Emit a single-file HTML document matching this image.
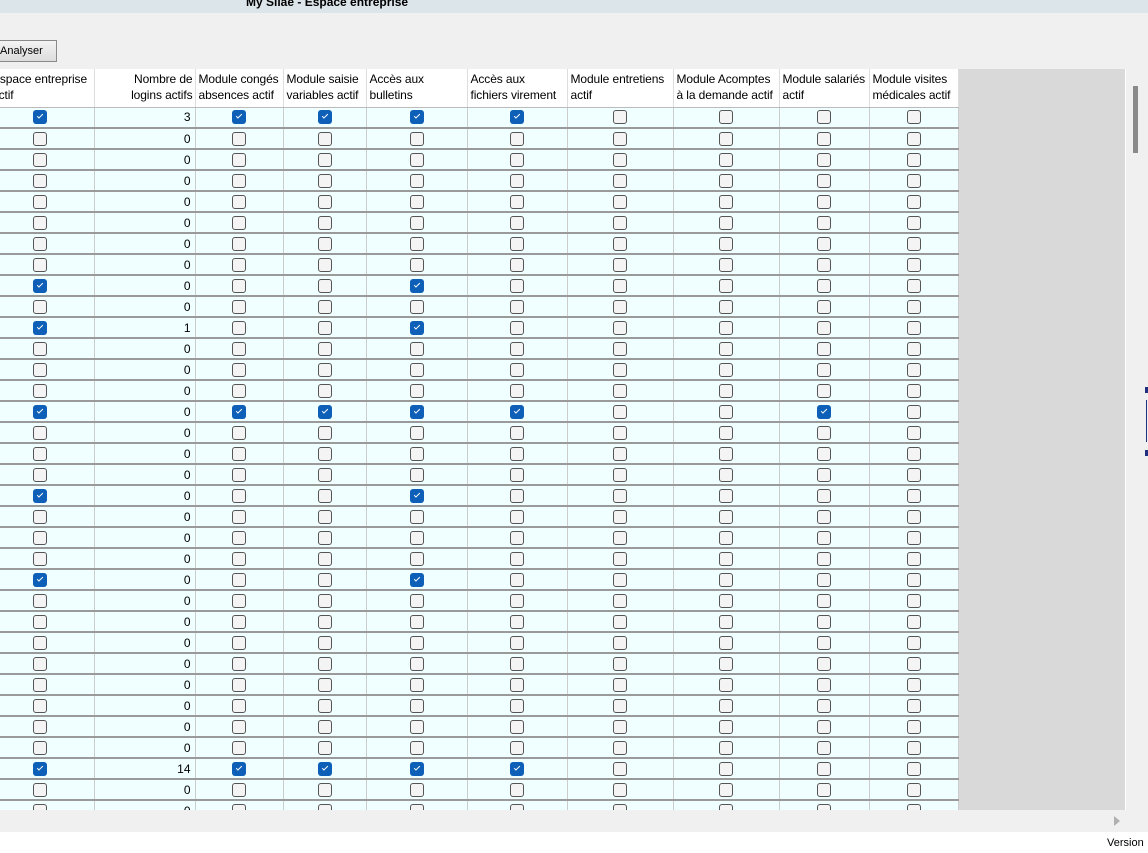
<!DOCTYPE html>
<html><head><meta charset="utf-8"><style>
*{margin:0;padding:0;box-sizing:border-box}
body{width:1148px;height:853px;overflow:hidden;background:#f0f0f0;font-family:"Liberation Sans","DejaVu Sans",sans-serif;font-size:12px;color:#000;position:relative}
.title{position:absolute;left:0;top:0;width:1148px;height:13px;background:#dce5ea;overflow:hidden}
.title span{position:absolute;left:246px;top:-5px;font-weight:bold;font-size:12px}
.btn{position:absolute;left:-4px;top:40px;width:61px;height:22px;border:1px solid #8a8a8a;background:linear-gradient(#f4f4f4,#dcdcdc);font-size:11px;line-height:20px;padding-left:3px}
.gray{position:absolute;left:958px;top:69px;width:167px;height:741px;background:#d9d9d9}
.wline{position:absolute;left:1125px;top:69px;width:1px;height:741px;background:#fff}
.thumb{position:absolute;left:1133px;top:86px;width:5px;height:67px;background:#8a8a8a}
.mk{position:absolute;left:1145px;width:3px;background:#203080}
.bottom{position:absolute;left:0;top:832px;width:1148px;height:21px;background:#fff}
.ver{position:absolute;left:1107px;top:837px;font-size:11px}
.arr{position:absolute;left:1114px;top:816px;width:0;height:0;border-left:6px solid #b0b0b0;border-top:5px solid transparent;border-bottom:5px solid transparent}
table{position:absolute;left:0;top:69px;border-collapse:collapse;table-layout:fixed;width:958px;background:#f0ffff}
td,th{overflow:hidden;white-space:nowrap;padding:0}
th{background:#fff;font-weight:normal;text-align:left;height:38px;line-height:16px;vertical-align:top;padding:2px 2px 0 3px;border-right:1px solid #ddd;border-bottom:1px solid #bbb;letter-spacing:-0.1px}
th.r{text-align:right}
th.f{text-indent:-11px;padding-left:0}
th.f span{margin-left:-8px}
td{height:21px;border-bottom:2px solid #9a9a9a;border-right:1px solid #ccc;text-align:center;vertical-align:middle}
td:first-child{padding-right:13px}
td.n{text-align:right;padding-right:4px}
tr.sel td{border-bottom:2px solid #9a9a9a}
i,b{display:inline-block;width:14px;height:14px;border-radius:3px;vertical-align:middle;margin-top:-1px}
i{border:1px solid #555;background:#f4f4f4}
b{background:#0e5fb8;position:relative}
b:after{content:"";position:absolute;left:4px;top:4px;width:5px;height:2px;border-left:1px solid #fff;border-bottom:1px solid #fff;transform:rotate(-45deg)}
</style></head><body>
<div class="title"><span>My Silae - Espace entreprise</span></div>
<div class="btn">Analyser</div>
<div class="gray"></div><div class="wline"></div>
<div class="thumb"></div>
<div class="mk" style="top:387px;height:6px"></div><div class="mk" style="top:400px;height:42px;width:1px;left:1146px"></div><div class="mk" style="top:450px;height:6px"></div>
<table>
<colgroup><col style="width:94px"><col style="width:101px"><col style="width:88px"><col style="width:83px"><col style="width:101px"><col style="width:100px"><col style="width:106px"><col style="width:106px"><col style="width:90px"><col style="width:89px"></colgroup>
<tr><th class="f"><div style="margin-left:-8px;text-indent:0">Espace entreprise<br>actif</div></th><th class="r">Nombre de<br>logins actifs</th><th>Module congés<br>absences actif</th><th>Module saisie<br>variables actif</th><th>Accès aux<br>bulletins</th><th>Accès aux<br>fichiers virement</th><th>Module entretiens<br>actif</th><th>Module Acomptes<br>à la demande actif</th><th>Module salariés<br>actif</th><th>Module visites<br>médicales actif</th></tr>
<tr class="sel"><td><b></b></td><td class="n">3</td><td><b></b></td><td><b></b></td><td><b></b></td><td><b></b></td><td><i></i></td><td><i></i></td><td><i></i></td><td><i></i></td></tr>
<tr><td><i></i></td><td class="n">0</td><td><i></i></td><td><i></i></td><td><i></i></td><td><i></i></td><td><i></i></td><td><i></i></td><td><i></i></td><td><i></i></td></tr>
<tr><td><i></i></td><td class="n">0</td><td><i></i></td><td><i></i></td><td><i></i></td><td><i></i></td><td><i></i></td><td><i></i></td><td><i></i></td><td><i></i></td></tr>
<tr><td><i></i></td><td class="n">0</td><td><i></i></td><td><i></i></td><td><i></i></td><td><i></i></td><td><i></i></td><td><i></i></td><td><i></i></td><td><i></i></td></tr>
<tr><td><i></i></td><td class="n">0</td><td><i></i></td><td><i></i></td><td><i></i></td><td><i></i></td><td><i></i></td><td><i></i></td><td><i></i></td><td><i></i></td></tr>
<tr><td><i></i></td><td class="n">0</td><td><i></i></td><td><i></i></td><td><i></i></td><td><i></i></td><td><i></i></td><td><i></i></td><td><i></i></td><td><i></i></td></tr>
<tr><td><i></i></td><td class="n">0</td><td><i></i></td><td><i></i></td><td><i></i></td><td><i></i></td><td><i></i></td><td><i></i></td><td><i></i></td><td><i></i></td></tr>
<tr><td><i></i></td><td class="n">0</td><td><i></i></td><td><i></i></td><td><i></i></td><td><i></i></td><td><i></i></td><td><i></i></td><td><i></i></td><td><i></i></td></tr>
<tr><td><b></b></td><td class="n">0</td><td><i></i></td><td><i></i></td><td><b></b></td><td><i></i></td><td><i></i></td><td><i></i></td><td><i></i></td><td><i></i></td></tr>
<tr><td><i></i></td><td class="n">0</td><td><i></i></td><td><i></i></td><td><i></i></td><td><i></i></td><td><i></i></td><td><i></i></td><td><i></i></td><td><i></i></td></tr>
<tr><td><b></b></td><td class="n">1</td><td><i></i></td><td><i></i></td><td><b></b></td><td><i></i></td><td><i></i></td><td><i></i></td><td><i></i></td><td><i></i></td></tr>
<tr><td><i></i></td><td class="n">0</td><td><i></i></td><td><i></i></td><td><i></i></td><td><i></i></td><td><i></i></td><td><i></i></td><td><i></i></td><td><i></i></td></tr>
<tr><td><i></i></td><td class="n">0</td><td><i></i></td><td><i></i></td><td><i></i></td><td><i></i></td><td><i></i></td><td><i></i></td><td><i></i></td><td><i></i></td></tr>
<tr><td><i></i></td><td class="n">0</td><td><i></i></td><td><i></i></td><td><i></i></td><td><i></i></td><td><i></i></td><td><i></i></td><td><i></i></td><td><i></i></td></tr>
<tr><td><b></b></td><td class="n">0</td><td><b></b></td><td><b></b></td><td><b></b></td><td><b></b></td><td><i></i></td><td><i></i></td><td><b></b></td><td><i></i></td></tr>
<tr><td><i></i></td><td class="n">0</td><td><i></i></td><td><i></i></td><td><i></i></td><td><i></i></td><td><i></i></td><td><i></i></td><td><i></i></td><td><i></i></td></tr>
<tr><td><i></i></td><td class="n">0</td><td><i></i></td><td><i></i></td><td><i></i></td><td><i></i></td><td><i></i></td><td><i></i></td><td><i></i></td><td><i></i></td></tr>
<tr><td><i></i></td><td class="n">0</td><td><i></i></td><td><i></i></td><td><i></i></td><td><i></i></td><td><i></i></td><td><i></i></td><td><i></i></td><td><i></i></td></tr>
<tr><td><b></b></td><td class="n">0</td><td><i></i></td><td><i></i></td><td><b></b></td><td><i></i></td><td><i></i></td><td><i></i></td><td><i></i></td><td><i></i></td></tr>
<tr><td><i></i></td><td class="n">0</td><td><i></i></td><td><i></i></td><td><i></i></td><td><i></i></td><td><i></i></td><td><i></i></td><td><i></i></td><td><i></i></td></tr>
<tr><td><i></i></td><td class="n">0</td><td><i></i></td><td><i></i></td><td><i></i></td><td><i></i></td><td><i></i></td><td><i></i></td><td><i></i></td><td><i></i></td></tr>
<tr><td><i></i></td><td class="n">0</td><td><i></i></td><td><i></i></td><td><i></i></td><td><i></i></td><td><i></i></td><td><i></i></td><td><i></i></td><td><i></i></td></tr>
<tr><td><b></b></td><td class="n">0</td><td><i></i></td><td><i></i></td><td><b></b></td><td><i></i></td><td><i></i></td><td><i></i></td><td><i></i></td><td><i></i></td></tr>
<tr><td><i></i></td><td class="n">0</td><td><i></i></td><td><i></i></td><td><i></i></td><td><i></i></td><td><i></i></td><td><i></i></td><td><i></i></td><td><i></i></td></tr>
<tr><td><i></i></td><td class="n">0</td><td><i></i></td><td><i></i></td><td><i></i></td><td><i></i></td><td><i></i></td><td><i></i></td><td><i></i></td><td><i></i></td></tr>
<tr><td><i></i></td><td class="n">0</td><td><i></i></td><td><i></i></td><td><i></i></td><td><i></i></td><td><i></i></td><td><i></i></td><td><i></i></td><td><i></i></td></tr>
<tr><td><i></i></td><td class="n">0</td><td><i></i></td><td><i></i></td><td><i></i></td><td><i></i></td><td><i></i></td><td><i></i></td><td><i></i></td><td><i></i></td></tr>
<tr><td><i></i></td><td class="n">0</td><td><i></i></td><td><i></i></td><td><i></i></td><td><i></i></td><td><i></i></td><td><i></i></td><td><i></i></td><td><i></i></td></tr>
<tr><td><i></i></td><td class="n">0</td><td><i></i></td><td><i></i></td><td><i></i></td><td><i></i></td><td><i></i></td><td><i></i></td><td><i></i></td><td><i></i></td></tr>
<tr><td><i></i></td><td class="n">0</td><td><i></i></td><td><i></i></td><td><i></i></td><td><i></i></td><td><i></i></td><td><i></i></td><td><i></i></td><td><i></i></td></tr>
<tr><td><i></i></td><td class="n">0</td><td><i></i></td><td><i></i></td><td><i></i></td><td><i></i></td><td><i></i></td><td><i></i></td><td><i></i></td><td><i></i></td></tr>
<tr><td><b></b></td><td class="n">14</td><td><b></b></td><td><b></b></td><td><b></b></td><td><b></b></td><td><i></i></td><td><i></i></td><td><i></i></td><td><i></i></td></tr>
<tr><td><i></i></td><td class="n">0</td><td><i></i></td><td><i></i></td><td><i></i></td><td><i></i></td><td><i></i></td><td><i></i></td><td><i></i></td><td><i></i></td></tr>
<tr><td><i></i></td><td class="n">0</td><td><i></i></td><td><i></i></td><td><i></i></td><td><i></i></td><td><i></i></td><td><i></i></td><td><i></i></td><td><i></i></td></tr>
</table>
<div style="position:absolute;left:0;top:810px;width:1148px;height:22px;background:#f0f0f0"></div>
<div class="arr"></div>
<div class="bottom"></div>
<div class="ver">Version</div>
</body></html>
